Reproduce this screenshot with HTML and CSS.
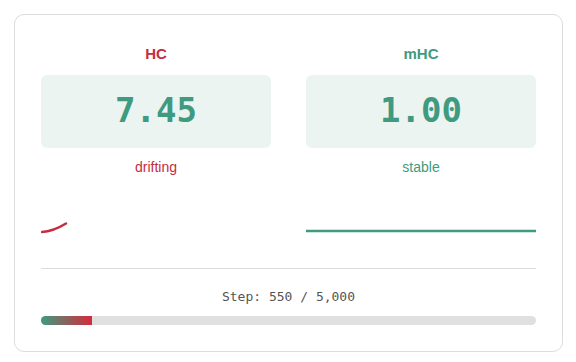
FILE: index.html
```html
<!doctype html>
<html lang="en">
<head>
    <meta charset="UTF-8">
    <meta name="viewport" content="width=device-width, initial-scale=1.0">
    <title>HC vs mHC</title>
    <link rel="stylesheet" href="styles.css">
</head>
<body>

<div class="card">
    <div class="cols">
        <div class="col hc">
            <div class="label">HC</div>
            <div class="value">7.45</div>
            <div class="status">drifting</div>
            <svg class="chart" width="230" height="60" viewBox="0 0 230 60">
                <path d="M1 46 Q12 45.5 25 37.5" fill="none" stroke="#c62b40" stroke-width="2.5" stroke-linecap="round"/>
            </svg>
        </div>
        <div class="col mhc">
            <div class="label">mHC</div>
            <div class="value">1.00</div>
            <div class="status">stable</div>
            <svg class="chart" width="230" height="60" viewBox="0 0 230 60">
                <path d="M0 45 L230 45" fill="none" stroke="#3f9a80" stroke-width="2.5"/>
            </svg>
        </div>
    </div>

    <div class="divider"></div>

    <div class="step">Step: 550 / 5,000</div>
    <div class="bar">
        <div class="fill" style="width: 10.3%"></div>
    </div>
</div>

</body>
</html>
```

FILE: styles.css
```css
body{
    margin: 14px 13px 14px 14px;
    background-color: #fff;
    font-family: "Liberation Sans", Arial, sans-serif;
}
.card{
    border: 1px solid #dcdcdc;
    border-radius: 10px;
    padding: 29px 26px 26px;
}
.cols{
    display: grid;
    grid-template-columns: 1fr 1fr;
    column-gap: 35px;
}
.col{
    display: flex;
    flex-direction: column;
    align-items: center;
}
.label{
    font-size: 15px;
    font-weight: bold;
    line-height: 20px;
}
.value{
    align-self: stretch;
    margin-top: 11px;
    height: 73px;
    line-height: 71px;
    border-radius: 6px;
    background-color: #ecf4f2;
    color: #3f9a80;
    text-align: center;
    font-family: "DejaVu Sans Mono", monospace;
    font-weight: bold;
    font-size: 34px;
}
.status{
    margin-top: 10px;
    font-size: 14px;
    line-height: 18px;
}
.chart{
    display: block;
    margin-top: 10px;
    align-self: stretch;
}
.hc .label,
.hc .status{
    color: #c62b40;
}
.mhc .label,
.mhc .status{
    color: #3f9a80;
}
.divider{
    margin-top: 22px;
    height: 1px;
    background-color: #dcdcdc;
}
.step{
    margin-top: 19px;
    text-align: center;
    font-family: "DejaVu Sans Mono", monospace;
    font-size: 13px;
    line-height: 18px;
    color: #555;
}
.bar{
    margin-top: 10px;
    height: 9px;
    border-radius: 5px;
    overflow: hidden;
    background-color: #e0e0e0;
}
.fill{
    height: 100%;
    background: linear-gradient(to right, #3f9a80, #d42a3c);
}
```
